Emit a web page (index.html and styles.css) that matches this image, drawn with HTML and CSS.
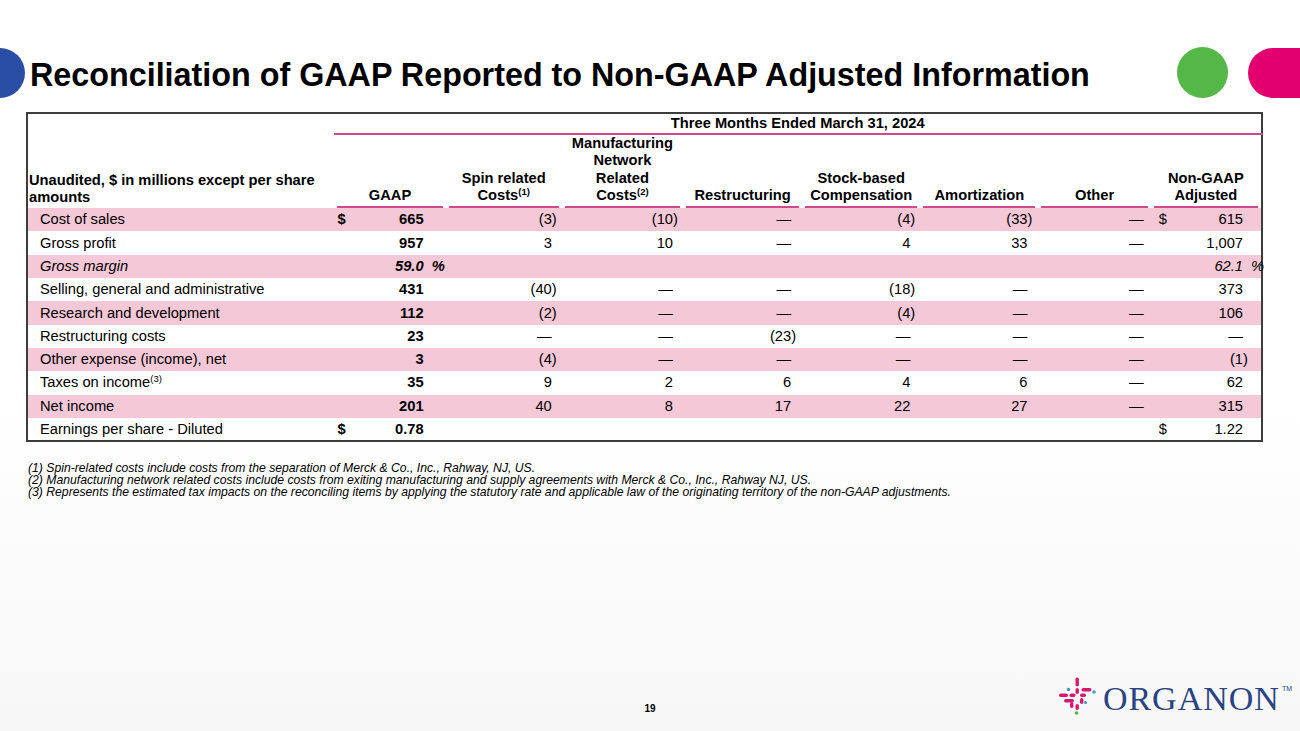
FILE: index.html
```html
<!DOCTYPE html>
<html lang="en">
<head>
<meta charset="utf-8">
<title>Reconciliation of GAAP Reported to Non-GAAP Adjusted Information</title>
<link rel="stylesheet" href="styles.css">
</head>
<body>
<div class="slide">
  <header class="top">
    <span class="dot dot-blue"></span>
    <h1 class="title">Reconciliation of GAAP Reported to Non-GAAP Adjusted Information</h1>
    <span class="dot dot-green"></span>
    <span class="pill-pink"></span>
  </header>

  <table class="recon">
    <colgroup>
      <col class="c-lab"><col class="c-gaap"><col class="c-spin"><col class="c-mfg"><col class="c-restr"><col class="c-stock"><col class="c-amort"><col class="c-other"><col class="c-non">
    </colgroup>
    <thead>
      <tr class="period-row">
        <th></th>
        <th colspan="8" class="period">Three Months Ended March 31, 2024</th>
      </tr>
      <tr class="head-row">
        <th class="lab-head">Unaudited, $ in millions except per share amounts</th>
        <th><div class="hc">GAAP</div></th>
        <th><div class="hc">Spin related<br>Costs<sup>(1)</sup></div></th>
        <th><div class="hc">Manufacturing<br>Network<br>Related<br>Costs<sup>(2)</sup></div></th>
        <th><div class="hc">Restructuring</div></th>
        <th><div class="hc">Stock-based<br>Compensation</div></th>
        <th><div class="hc">Amortization</div></th>
        <th><div class="hc">Other</div></th>
        <th><div class="hc">Non-GAAP<br>Adjusted</div></th>
      </tr>
    </thead>
    <tbody>
      <tr class="alt">
        <td class="lab">Cost of sales</td>
        <td class="gaap"><span class="cur">$</span>665</td>
        <td>(3<span class="rp">)</span></td><td>(10<span class="rp">)</span></td><td>—</td><td>(4<span class="rp">)</span></td><td>(33<span class="rp">)</span></td><td>—</td>
        <td class="non"><span class="cur">$</span>615</td>
      </tr>
      <tr>
        <td class="lab">Gross profit</td>
        <td class="gaap">957</td>
        <td>3</td><td>10</td><td>—</td><td>4</td><td>33</td><td>—</td>
        <td class="non">1,007</td>
      </tr>
      <tr class="alt ital">
        <td class="lab">Gross margin</td>
        <td class="gaap">59.0<span class="pct">%</span></td>
        <td></td><td></td><td></td><td></td><td></td><td></td>
        <td class="non">62.1<span class="pct">%</span></td>
      </tr>
      <tr>
        <td class="lab">Selling, general and administrative</td>
        <td class="gaap">431</td>
        <td>(40<span class="rp">)</span></td><td>—</td><td>—</td><td>(18<span class="rp">)</span></td><td>—</td><td>—</td>
        <td class="non">373</td>
      </tr>
      <tr class="alt">
        <td class="lab">Research and development</td>
        <td class="gaap">112</td>
        <td>(2<span class="rp">)</span></td><td>—</td><td>—</td><td>(4<span class="rp">)</span></td><td>—</td><td>—</td>
        <td class="non">106</td>
      </tr>
      <tr>
        <td class="lab">Restructuring costs</td>
        <td class="gaap">23</td>
        <td>—</td><td>—</td><td>(23<span class="rp">)</span></td><td>—</td><td>—</td><td>—</td>
        <td class="non">—</td>
      </tr>
      <tr class="alt">
        <td class="lab">Other expense (income), net</td>
        <td class="gaap">3</td>
        <td>(4<span class="rp">)</span></td><td>—</td><td>—</td><td>—</td><td>—</td><td>—</td>
        <td class="non">(1<span class="rp">)</span></td>
      </tr>
      <tr>
        <td class="lab">Taxes on income<sup>(3)</sup></td>
        <td class="gaap">35</td>
        <td>9</td><td>2</td><td>6</td><td>4</td><td>6</td><td>—</td>
        <td class="non">62</td>
      </tr>
      <tr class="alt">
        <td class="lab">Net income</td>
        <td class="gaap">201</td>
        <td>40</td><td>8</td><td>17</td><td>22</td><td>27</td><td>—</td>
        <td class="non">315</td>
      </tr>
      <tr>
        <td class="lab">Earnings per share - Diluted</td>
        <td class="gaap"><span class="cur">$</span>0.78</td>
        <td></td><td></td><td></td><td></td><td></td><td></td>
        <td class="non"><span class="cur">$</span>1.22</td>
      </tr>
    </tbody>
  </table>

  <div class="notes">
    <p>(1) Spin-related costs include costs from the separation of Merck &amp; Co., Inc., Rahway, NJ, US.</p>
    <p>(2) Manufacturing network related costs include costs from exiting manufacturing and supply agreements with Merck &amp; Co., Inc., Rahway NJ, US.</p>
    <p>(3) Represents the estimated tax impacts on the reconciling items by applying the statutory rate and applicable law of the originating territory of the non-GAAP adjustments.</p>
  </div>

  <footer class="foot">
    <span class="foot-spacer"></span>
    <span class="page-no">19</span>
    <div class="logo">
      <svg class="logo-mark" width="38" height="38" viewBox="0 0 38 38" aria-hidden="true">
        <g fill="#d6196f">
          <rect x="16.5" y="0.5" width="3.4" height="9" rx="1.7"/>
          <rect x="16.5" y="11" width="3.4" height="6" rx="1.7"/>
          <rect x="0" y="16.5" width="9" height="3.4" rx="1.7"/>
          <rect x="10.5" y="16.5" width="6" height="3.4" rx="1.7"/>
          <rect x="21" y="16.5" width="6" height="3.4" rx="1.7"/>
          <rect x="22.5" y="11" width="10" height="3.4" rx="1.7"/>
          <rect x="5" y="22" width="10" height="3.4" rx="1.7"/>
          <rect x="21" y="21" width="3.4" height="6" rx="1.7"/>
          <rect x="16.5" y="27" width="3.4" height="6" rx="1.7"/>
          <rect x="11" y="25" width="3.4" height="6" rx="1.7"/>
        </g>
        <circle cx="9.5" cy="12.5" r="1.7" fill="#3a8fc9"/>
        <circle cx="35" cy="15" r="1.8" fill="#3aa0d6"/>
        <circle cx="17.5" cy="36" r="1.8" fill="#56b848"/>
        <circle cx="26.5" cy="25.5" r="1.5" fill="#3a8fc9"/>
      </svg>
      <span class="logo-word">ORGANON</span><sup class="tm">TM</sup>
    </div>
  </footer>
</div>
</body>
</html>
```

FILE: styles.css
```css
* { box-sizing: border-box; }

html, body {
  margin: 0;
  padding: 0;
}

body {
  width: 1300px;
  height: 731px;
  overflow: hidden;
  font-family: "Liberation Sans", Arial, sans-serif;
  color: #000;
  background: #fff;
}

.slide {
  width: 1300px;
  height: 731px;
  display: flex;
  flex-direction: column;
  overflow: hidden;
  background: linear-gradient(180deg, #ffffff 0%, #ffffff 55%, #f7f7f7 100%);
}

/* Title bar */
.top {
  display: flex;
  align-items: center;
  height: 51px;
  margin-top: 47px;
  overflow: hidden;
}

.dot {
  flex: none;
  border-radius: 50%;
}

.dot-blue {
  width: 50px;
  height: 50px;
  margin-left: -25px;
  background: #2a4ea6;
}

.title {
  margin: 4px 0 0 5px;
  font-size: 32.3px;
  line-height: 36px;
  font-weight: bold;
  white-space: nowrap;
}

.dot-green {
  width: 51px;
  height: 51px;
  margin-left: auto;
  background: #55b747;
}

.pill-pink {
  flex: none;
  width: 80px;
  height: 50px;
  margin-left: 20px;
  margin-right: -28px;
  border-radius: 25px;
  background: #e2006f;
}

/* Table */
.recon {
  margin: 14px 0 0 26px;
  width: 1237px;
  border: 2px solid #3d3d3d;
  border-collapse: collapse;
  table-layout: fixed;
  font-size: 14.7px;
}

.c-lab { width: 307px; }
.c-gaap { width: 111px; }
.c-spin { width: 116px; }
.c-mfg { width: 121px; }
.c-restr { width: 119px; }
.c-stock { width: 118px; }
.c-amort { width: 118px; }
.c-other { width: 112px; }
.c-non { width: 111px; }

.recon th {
  font-weight: bold;
  padding: 0;
}

.period-row th {
  height: 21px;
  vertical-align: middle;
}

.period {
  text-align: center;
  border-bottom: 2px solid #cf4a8b;
  line-height: 17px;
}

.head-row th {
  vertical-align: bottom;
  line-height: 17.3px;
  padding: 0 3px;
}

.head-row .lab-head {
  text-align: left;
  padding: 0 0 2px 1px;
}

.hc {
  text-align: center;
  border-bottom: 2px solid #cf4a8b;
  padding-bottom: 2px;
}

sup {
  font-size: 9.5px;
  line-height: 0;
  vertical-align: 5px;
  font-weight: normal;
}

.head-row sup {
  font-weight: bold;
}

.recon td {
  height: 23.3px;
  padding: 0 10px 0 0;
  text-align: right;
  vertical-align: middle;
  line-height: 17px;
  white-space: nowrap;
}

.recon tbody tr.alt td {
  background: #f4c8d6;
}

.recon td.lab {
  text-align: left;
  padding-left: 12px;
}

.recon td.gaap {
  font-weight: bold;
  padding-right: 22px;
  padding-left: 3px;
}

.recon td:nth-child(4) { padding-right: 10px; }
.recon td:nth-child(5) { padding-right: 11px; }
.recon td:nth-child(7) { padding-right: 11px; }
.recon td:nth-child(8) { padding-right: 7px; }

.recon td.non {
  padding-right: 18px;
  padding-left: 8px;
}

.cur {
  float: left;
}

.rp {
  display: inline-block;
  width: 0;
}

.pct {
  display: inline-block;
  width: 0;
  text-indent: 8px;
}

.ital td {
  font-style: italic;
}

/* Footnotes */
.notes {
  margin: 20px 0 0 28px;
  font-size: 12.2px;
  font-style: italic;
  line-height: 12px;
}

.notes p {
  margin: 0;
}

/* Footer */
.foot {
  margin-top: auto;
  display: grid;
  grid-template-columns: 1fr auto 1fr;
  align-items: end;
  height: 56px;
  padding-bottom: 14px;
}

.page-no {
  font-size: 10px;
  font-weight: bold;
  line-height: 12px;
  padding-bottom: 2px;
}

.logo {
  justify-self: end;
  display: flex;
  align-items: flex-start;
  margin-right: 8px;
}

.logo-mark {
  display: block;
  margin-right: 6px;
  margin-top: -2px;
}

.logo-word {
  font-family: "Liberation Serif", "Times New Roman", serif;
  font-size: 34px;
  line-height: 36px;
  letter-spacing: 1px;
  color: #2a4482;
  margin-top: 2px;
}

.tm {
  font-family: "Liberation Sans", Arial, sans-serif;
  font-size: 7px;
  color: #2a4482;
  vertical-align: top;
  line-height: 8px;
  margin-left: 2px;
  margin-top: 6px;
}
```
